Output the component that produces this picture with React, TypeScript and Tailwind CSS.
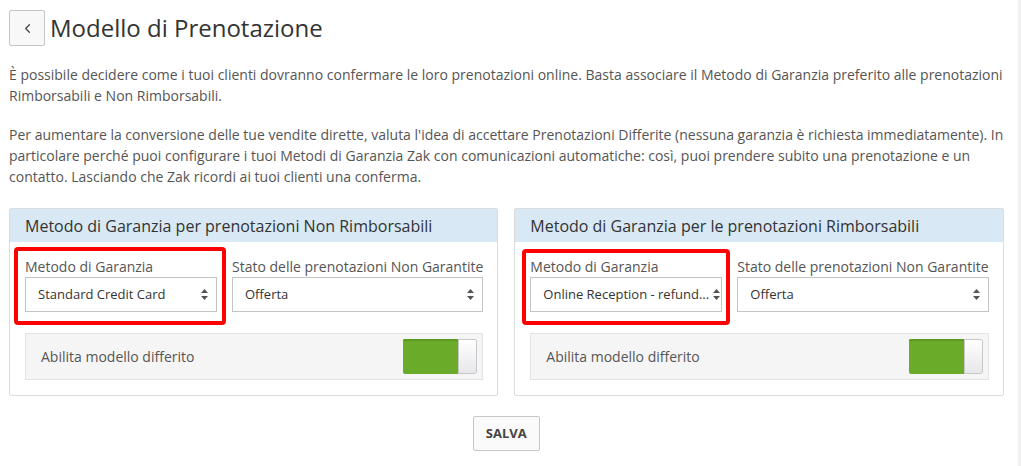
import { ChevronLeft } from "lucide-react";

const SelectCaret = () => (
  <svg width="7" height="11" viewBox="0 0 7 11" className="shrink-0">
    <path d="M3.5 0L7 4H0z" fill="#555" />
    <path d="M3.5 11L7 7H0z" fill="#555" />
  </svg>
);

const FakeSelect = ({ value }: { value: string }) => (
  <div className="h-[35px] border border-[#c4c4c4] bg-white flex items-center justify-between pl-[12px] pr-[8px] gap-1">
    <span className="text-[13px] text-[#333] whitespace-nowrap">{value}</span>
    <SelectCaret />
  </div>
);

const Toggle = () => (
  <div className="flex h-[35px] w-[74px] rounded-[2px] overflow-hidden">
    <div className="w-[55px] bg-[#6aab29] border-t-2 border-[#5c9a20]" />
    <div className="flex-1 border border-[#c8c8c8] rounded-r-[2px] bg-gradient-to-b from-[#ffffff] to-[#e6e7ea]" />
  </div>
);

interface PanelProps {
  title: string;
  method: string;
  highlight: string;
}

const Panel = ({ title, method, highlight }: PanelProps) => (
  <section className="flex-1 border border-[#dcdcdc] rounded-[2px] bg-white">
    <header className="h-[33px] bg-[#d8e8f5] flex items-center pl-[15px] text-[16px] text-[#333]">
      {title}
    </header>
    <div className="pl-[15px] pr-[14px] pt-[15px] pb-[15px]">
      <div className="grid grid-cols-[192px_1fr] gap-[15px]">
        <div className="relative">
          {/* annotation */}
          <div className={highlight} />
          <label className="block h-[20px] leading-[20px] text-[14px] text-[#555]">
            Metodo di Garanzia
          </label>
          <FakeSelect value={method} />
        </div>
        <div>
          <label className="block h-[20px] leading-[20px] text-[14px] text-[#555] whitespace-nowrap">
            Stato delle prenotazioni Non Garantite
          </label>
          <FakeSelect value="Offerta" />
        </div>
      </div>
      <div className="mt-[21px] h-[47px] bg-[#f5f5f5] border border-[#e3e3e3] flex items-center justify-between pl-[15px] pr-[5px]">
        <span className="text-[14px] text-[#555]">Abilita modello differito</span>
        <Toggle />
      </div>
    </div>
  </section>
);

export default function App() {
  return (
    <div
      className="h-[466px] w-full flex bg-white overflow-hidden"
      style={{ fontFamily: '"Open Sans", "Liberation Sans", sans-serif' }}
    >
      <main className="flex-1 pl-[9px] pr-[14px] pt-[10px]">
        <div className="flex items-center gap-[5px]">
          <button className="w-[36px] h-[36px] border border-[#c6c6c6] rounded-[2px] bg-[#f8f8f8] flex items-center justify-center">
            <ChevronLeft size={15} strokeWidth={2} color="#444" />
          </button>
          <h1 className="text-[24px] leading-[30px] text-[#333]">Modello di Prenotazione</h1>
        </div>

        <p className="mt-[18px] -mr-[12px] text-[14px] leading-[21px] text-[#555]">
          È possibile decidere come i tuoi clienti dovranno confermare le loro prenotazioni online. Basta associare il Metodo di Garanzia preferito alle prenotazioni Rimborsabili e Non Rimborsabili.
        </p>
        <p className="mt-[18px] -mr-[12px] text-[14px] leading-[21px] text-[#555]">
          Per aumentare la conversione delle tue vendite dirette, valuta l'idea di accettare Prenotazioni Differite (nessuna garanzia è richiesta immediatamente). In particolare perché puoi configurare i tuoi Metodi di Garanzia Zak con comunicazioni automatiche: così, puoi prendere subito una prenotazione e un contatto. Lasciando che Zak ricordi ai tuoi clienti una conferma.
        </p>

        <div className="mt-[21px] flex gap-[16px]">
          <Panel
            title="Metodo di Garanzia per prenotazioni Non Rimborsabili"
            method="Standard Credit Card"
            highlight="absolute -left-[11px] -right-[9px] -top-[10px] -bottom-[13px] border-[4px] border-[#ff0000] rounded-[4px] pointer-events-none"
          />
          <Panel
            title="Metodo di Garanzia per le prenotazioni Rimborsabili"
            method="Online Reception - refund..."
            highlight="absolute -left-[8px] -right-[8px] -top-[8px] -bottom-[13px] border-[4px] border-[#ff0000] rounded-[4px] pointer-events-none"
          />
        </div>

        <div className="mt-[20px] flex justify-center">
          <button className="h-[35px] px-[12px] border border-[#c8c8c8] rounded-[2px] bg-[#fafafa] text-[13px] font-bold text-[#444]">
            SALVA
          </button>
        </div>
      </main>
      <div className="w-[4px] bg-[#f1f1f1]" />
    </div>
  );
}
